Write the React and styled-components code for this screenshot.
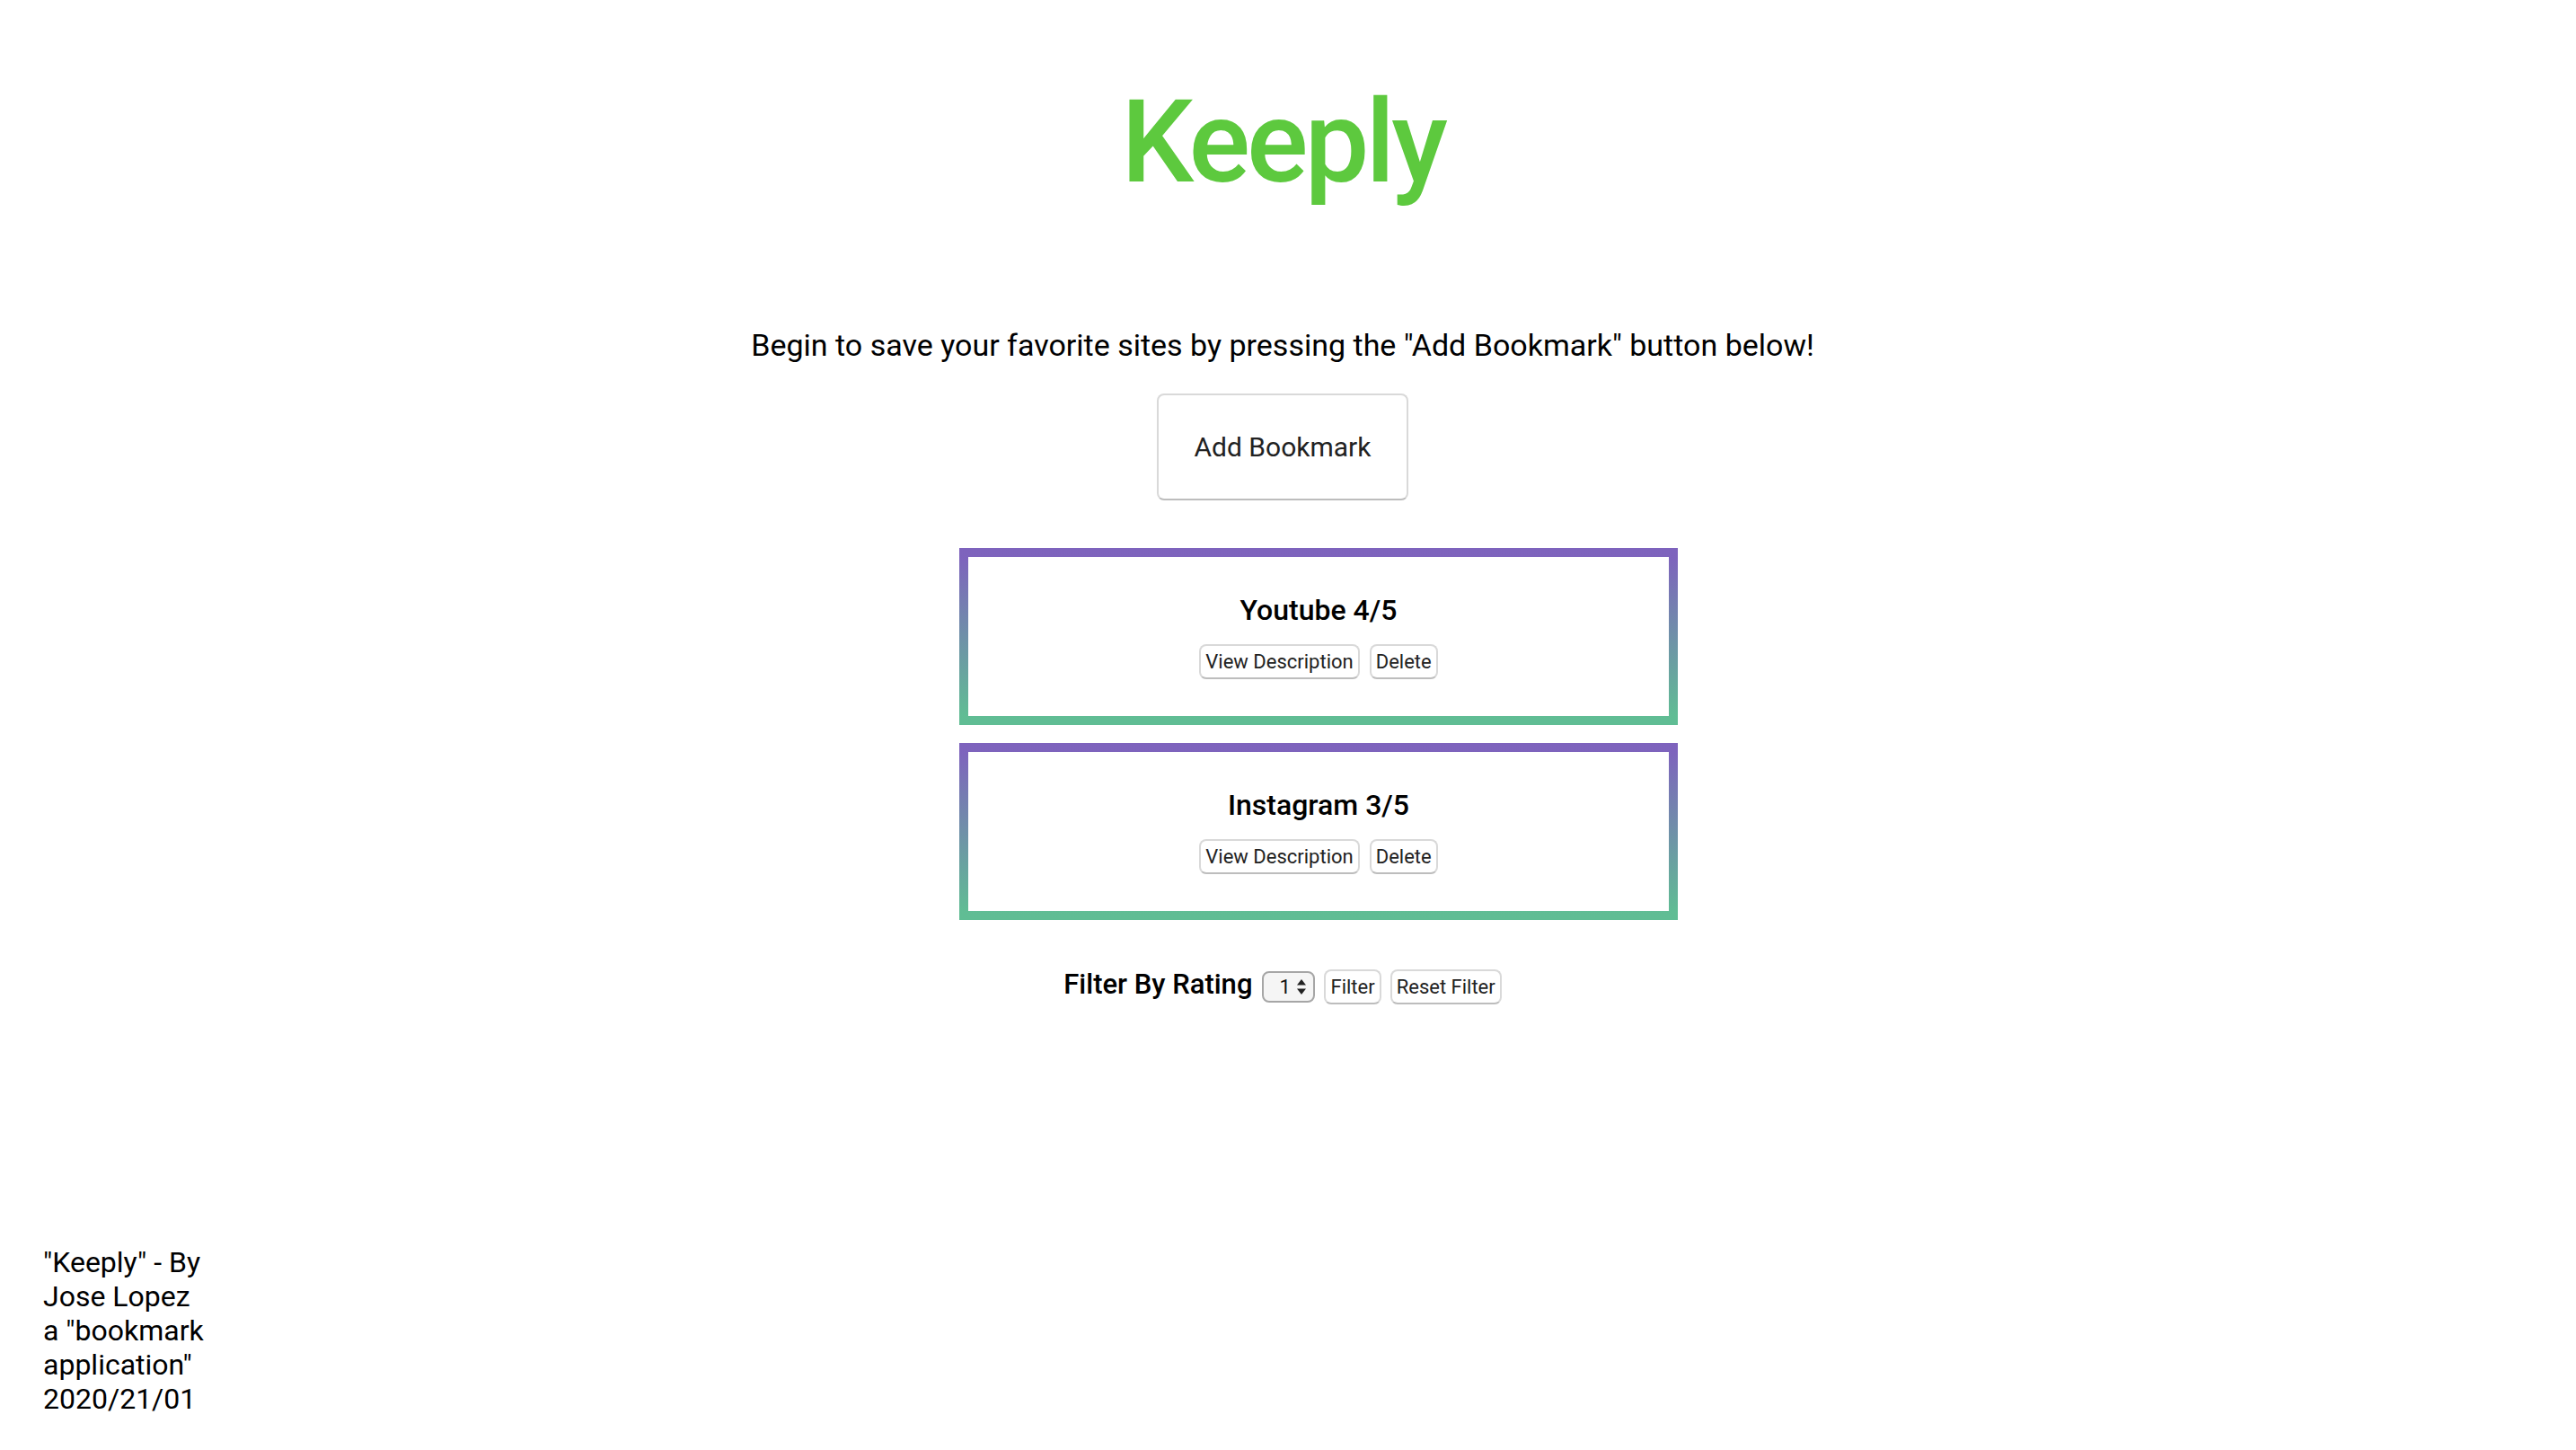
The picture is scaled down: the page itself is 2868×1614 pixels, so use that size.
import React, { useState } from "react";
import styled, { createGlobalStyle } from "styled-components";

const GlobalStyle = createGlobalStyle`
  html, body {
    margin: 0;
    padding: 0;
    background: #ffffff;
  }
  body {
    font-family: Roboto, "Liberation Sans", Arial, sans-serif;
    color: #000000;
  }
`;

const Page = styled.div`
  min-height: 100vh;
  display: flex;
  flex-direction: column;
  box-sizing: border-box;
  padding-right: 12px;
`;

const Main = styled.main`
  display: flex;
  flex-direction: column;
  align-items: center;
  padding-top: 83px;
`;

const Title = styled.h1`
  margin: 0;
  font-size: 128px;
  font-weight: 500;
  letter-spacing: -4px;
  line-height: normal;
  color: #5dc93e;
`;

const Intro = styled.p`
  margin: 131px 0 0;
  font-size: 34px;
  font-weight: 400;
  line-height: normal;
`;

const Button = styled.button`
  font-family: Roboto, "Liberation Sans", Arial, sans-serif;
  font-size: ${(p) => (p.$big ? "30px" : "22px")};
  line-height: normal;
  color: #222222;
  background: #ffffff;
  border: 2px solid #d9d9d9;
  border-bottom-color: #bdbdbd;
  border-radius: 8px;
  padding: ${(p) => (p.$big ? "40px 40px" : "5px 5px")};
  cursor: pointer;
`;

const AddButton = styled(Button)`
  margin-top: 34px;
`;

const CardList = styled.ul`
  list-style: none;
  margin: 53px 0 0;
  padding: 0 0 0 80px;
  display: flex;
  flex-direction: column;
  gap: 20px;
`;

const Card = styled.li`
  width: 800px;
  box-sizing: border-box;
  border: 10px solid;
  border-image: linear-gradient(to bottom, #7e63bd, #60bd94) 1;
  padding: 40px 0 41px;
  display: flex;
  flex-direction: column;
  align-items: center;
`;

const CardTitle = styled.h3`
  margin: 0 0 19px;
  font-size: 32px;
  font-weight: 500;
  line-height: 38px;
`;

const ButtonRow = styled.div`
  display: flex;
  gap: 11px;
`;

const FilterRow = styled.div`
  margin-top: 53px;
  display: flex;
  align-items: baseline;
  gap: 10px;
`;

const FilterLabel = styled.span`
  font-size: 31px;
  font-weight: 500;
  margin-right: 1px;
`;

const SelectWrap = styled.span`
  position: relative;
  display: inline-flex;
`;

const RatingSelect = styled.select`
  appearance: none;
  -webkit-appearance: none;
  font-family: Roboto, "Liberation Sans", Arial, sans-serif;
  font-size: 22px;
  line-height: normal;
  color: #111111;
  width: 59px;
  height: 35px;
  box-sizing: border-box;
  padding: 0 0 0 17px;
  background: #f5f5f5;
  border: 2px solid #a6a6a6;
  border-radius: 8px;
`;

const Arrows = styled.svg`
  position: absolute;
  right: 10px;
  top: 9px;
  pointer-events: none;
`;

const Footer = styled.footer`
  margin-top: auto;
  width: 180px;
  padding: 0 0 38px 48px;
  font-size: 32px;
  font-weight: 400;
  line-height: normal;
`;

const bookmarks = [
  { title: "Youtube", rating: 4 },
  { title: "Instagram", rating: 3 },
];

const App = () => {
  const [rating, setRating] = useState("1");

  return (
    <Page>
      <GlobalStyle />
      <Main>
        <Title>Keeply</Title>
        <Intro>
          Begin to save your favorite sites by pressing the "Add Bookmark" button below!
        </Intro>
        <AddButton $big>Add Bookmark</AddButton>
        <CardList>
          {bookmarks.map((b) => (
            <Card key={b.title}>
              <CardTitle>
                {b.title} {b.rating}/5
              </CardTitle>
              <ButtonRow>
                <Button>View Description</Button>
                <Button>Delete</Button>
              </ButtonRow>
            </Card>
          ))}
        </CardList>
        <FilterRow>
          <FilterLabel>Filter By Rating</FilterLabel>
          <SelectWrap>
            <RatingSelect value={rating} onChange={(e) => setRating(e.target.value)}>
              {[1, 2, 3, 4, 5].map((n) => (
                <option key={n} value={n}>
                  {n}
                </option>
              ))}
            </RatingSelect>
            <Arrows width="10" height="17" viewBox="0 0 10 17">
              <path d="M5 0 L10 6.5 L0 6.5 Z" fill="#222" />
              <path d="M5 17 L10 10.5 L0 10.5 Z" fill="#222" />
            </Arrows>
          </SelectWrap>
          <Button>Filter</Button>
          <Button>Reset Filter</Button>
        </FilterRow>
      </Main>
      <Footer>"Keeply" - By Jose Lopez a "bookmark application" 2020/21/01</Footer>
    </Page>
  );
};

export default App;
